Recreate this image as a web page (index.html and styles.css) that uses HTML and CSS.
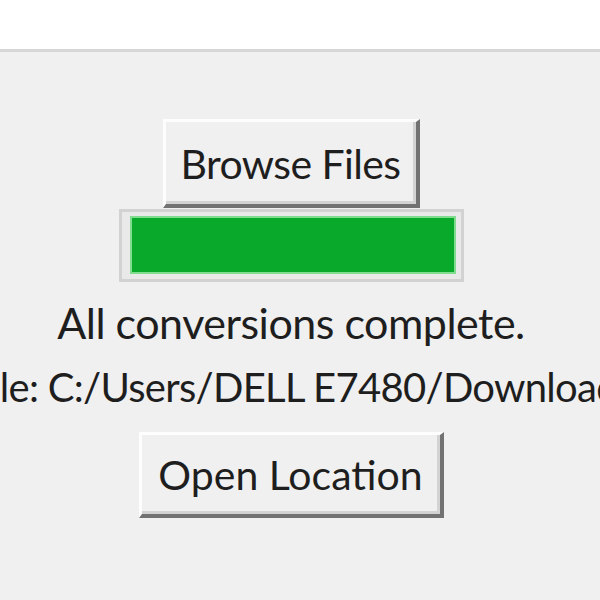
FILE: index.html
```html
<!DOCTYPE html>
<html lang="en">
<head>
    <meta charset="UTF-8">
    <meta name="viewport" content="width=device-width, initial-scale=1.0">
    <title>Converter</title>
    <link rel="stylesheet" href="styles.css">
</head>
<body>
    <div class="titlebar"></div>

    <div class="app">
        <button class="tk-button browse">Browse Files</button>

        <div class="progress">
            <div class="progress-fill"></div>
        </div>

        <div class="status">All conversions complete.</div>

        <div class="path">File: C:/Users/DELL E7480/Downloads/converted</div>

        <button class="tk-button open">Open Location</button>
    </div>
</body>
</html>
```

FILE: styles.css
```css
body {
    margin: 0;
    background-color: #f0f0f0;
    font-family: Lato, "Open Sans", sans-serif;
    color: #1e1e1e;
    overflow: hidden;
}
.titlebar {
    height: 49px;
    background: white;
    border-bottom: 3px solid #d7d7d7;
}
.app {
    display: flex;
    flex-direction: column;
    align-items: center;
    padding-top: 67px;
    padding-right: 18px;
}
.tk-button {
    box-sizing: border-box;
    font-family: inherit;
    font-size: 41px;
    color: #1e1e1e;
    background: #f0f0f0;
    border-style: solid;
    border-width: 3px 4px 4px 3px;
    border-color: #fdfdfd #727272 #727272 #fdfdfd;
    box-shadow: inset -3px -3px 0 #d3d3d3;
    padding: 0;
}
.browse {
    width: 257px;
    height: 89px;
    letter-spacing: -0.6px;
}
.open {
    width: 305px;
    height: 86px;
    margin-top: 19px;
}
.progress {
    box-sizing: border-box;
    width: 345px;
    height: 73px;
    margin-top: 1px;
    padding: 4px 5px 5px 8px;
    border: 3px solid #d2d2d2;
    background: #e9e9e9;
    display: flex;
}
.progress-fill {
    flex: 1;
    background: #09a92c;
    border: 2px solid #80dc8e;
}
.status {
    margin-top: 15px;
    font-size: 43px;
    line-height: 52px;
    letter-spacing: -0.5px;
}
.path {
    align-self: stretch;
    margin-right: -18px;
    margin-top: 12px;
    font-size: 40px;
    line-height: 52px;
    letter-spacing: -0.7px;
    white-space: nowrap;
    overflow: hidden;
    text-indent: -31px;
}
```
